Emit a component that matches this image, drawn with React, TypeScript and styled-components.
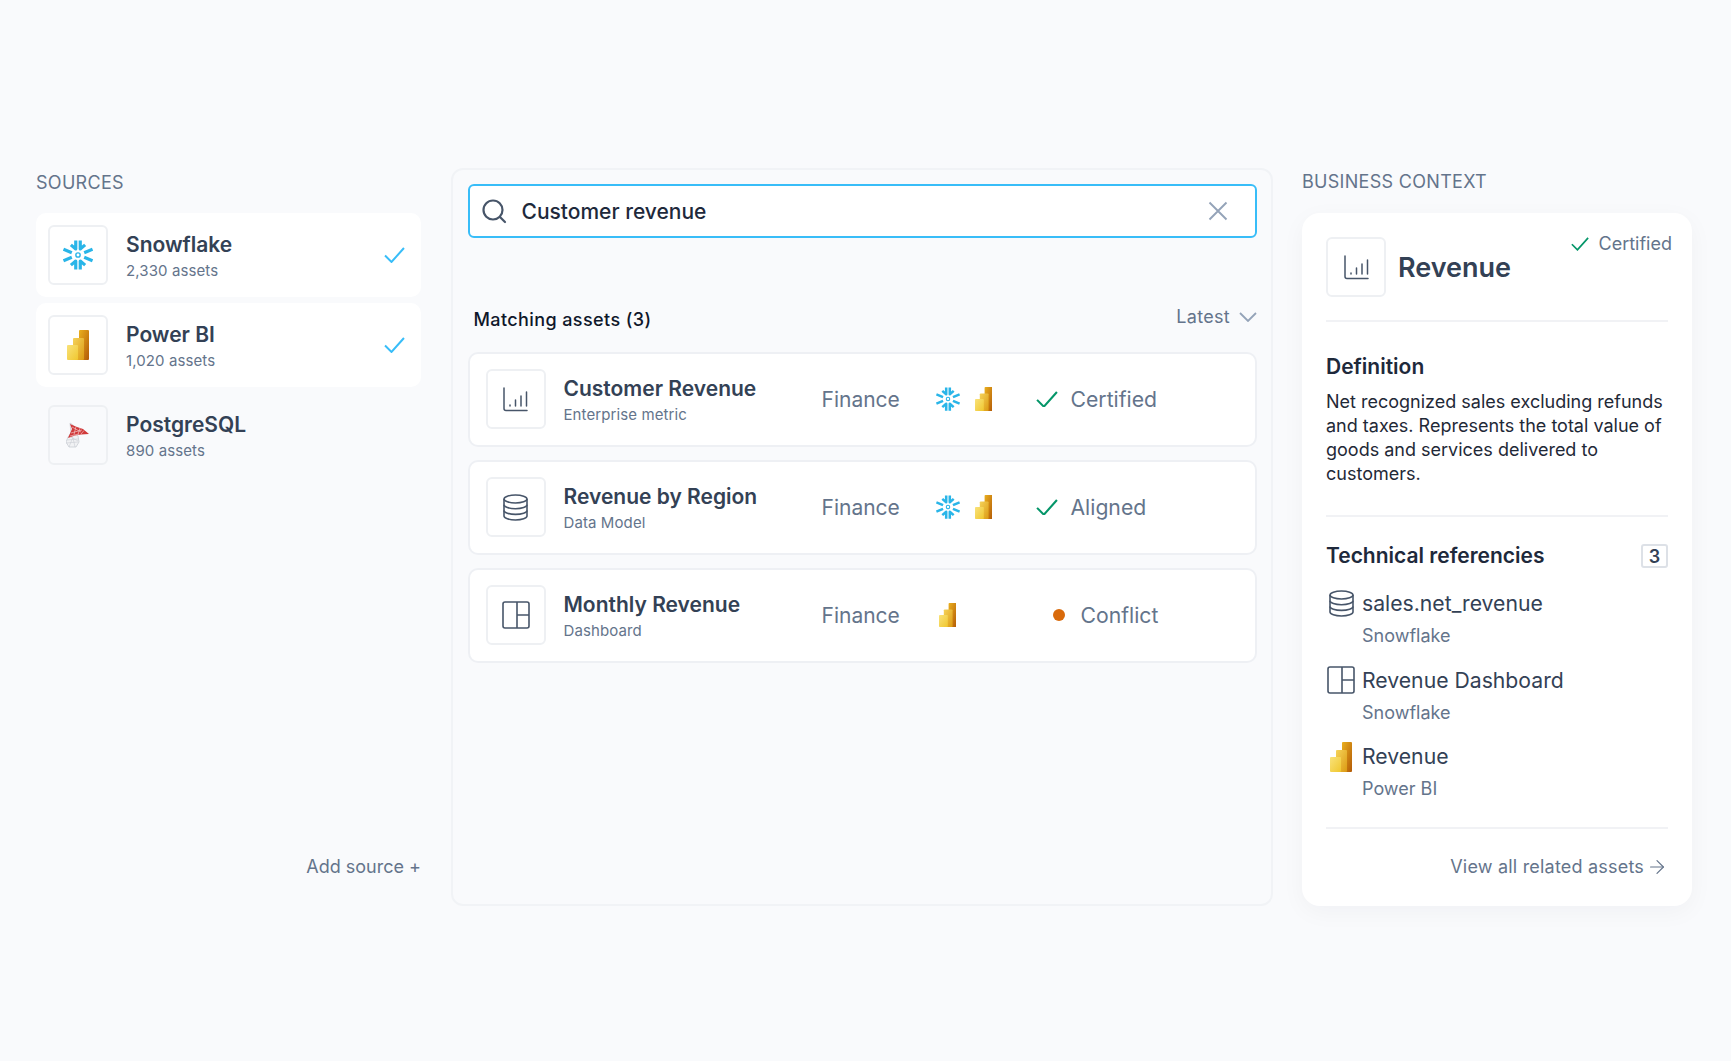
import React from "react";
import styled, { createGlobalStyle } from "styled-components";
import { ArrowRight } from "lucide-react";

const GlobalStyle = createGlobalStyle`
	html, body {
		margin: 0;
		padding: 0;
		background: #f9fafc;
		font-family: Inter, "Liberation Sans", sans-serif;
		-webkit-font-smoothing: antialiased;
	}
	* {
		box-sizing: border-box;
	}
`;

const Page = styled.div`
	width: 1731px;
	height: 1061px;
	padding: 168px 39px 0 36px;
	display: grid;
	grid-template-columns: 385px 822px 390px;
	column-gap: 29.5px;
	align-items: start;
`;

const Column = styled.section`
	height: 738px;
	display: flex;
	flex-direction: column;
`;

const SectionLabel = styled.h2<{ $nudge: number }>`
	margin: 0 0 20px;
	height: 25px;
	padding-top: ${(p) => p.$nudge}px;
	font-size: 18px;
	line-height: 25px;
	font-weight: 400;
	color: #64748b;
	letter-spacing: 0.3px;
`;

const SourceList = styled.div`
	display: flex;
	flex-direction: column;
	gap: 6px;
`;

const SourceCard = styled.div<{ $active?: boolean }>`
	height: 84px;
	padding: 12px 16px 12px 12px;
	display: flex;
	align-items: center;
	border-radius: 10px;
	background: ${(p) => (p.$active ? "#fff" : "transparent")};
`;

const IconBox = styled.div`
	width: 60px;
	height: 60px;
	flex: none;
	display: flex;
	align-items: center;
	justify-content: center;
	border: 2px solid #eef0f3;
	border-radius: 6px;
	color: #475569;
`;

const SourceText = styled.div`
	margin-left: 18px;
	padding-top: 2px;
	flex: 1;
`;

const SourceName = styled.div`
	font-size: 21px;
	line-height: 28px;
	font-weight: 600;
	color: #334155;
`;

const SourceCount = styled.div`
	margin-top: 2.5px;
	font-size: 15px;
	line-height: 20px;
	letter-spacing: 0.1px;
	color: #64748b;
`;

const AddSource = styled.div`
	margin-top: auto;
	margin-bottom: 27px;
	text-align: right;
	font-size: 18px;
	line-height: 24px;
	color: #64748b;
`;

const MiddlePanel = styled.section`
	height: 738px;
	padding: 14px 13.5px 0 15px;
	border: 2px solid #f1f3f6;
	border-radius: 12px;
`;

const SearchBar = styled.div`
	height: 54px;
	padding: 0 27px 0 11px;
	display: flex;
	align-items: center;
	background: #fff;
	border: 2px solid #38bdf8;
	border-radius: 6px;
	color: #475569;
`;

const SearchIcon = () => (
	<svg width="26" height="26" viewBox="0 0 26 26" fill="none" stroke="currentColor" strokeWidth="2.2" strokeLinecap="round">
		<circle cx="12" cy="12" r="9.5" />
		<path d="M19 19l5 5" />
	</svg>
);

const SearchText = styled.div`
	margin-left: 15px;
	flex: 1;
	font-size: 21px;
	font-weight: 500;
	color: #1e293b;
`;

const ListHead = styled.div`
	margin-top: 63px;
	padding: 0 0 0 6px;
	height: 34px;
	display: flex;
	align-items: center;
	justify-content: space-between;
`;

const ListTitle = styled.div`
	font-size: 18px;
	font-weight: 500;
	color: #0f172a;
	letter-spacing: 0.4px;
	padding-top: 2px;
`;

const SortBy = styled.div`
	display: flex;
	align-items: center;
	gap: 9px;
	font-size: 18px;
	color: #64748b;
	letter-spacing: 0.3px;
	margin-top: -3px;
`;

const AssetList = styled.div`
	margin-top: 16.5px;
	display: flex;
	flex-direction: column;
	gap: 13px;
`;

const AssetRow = styled.div`
	height: 95px;
	padding: 0 16px;
	display: flex;
	align-items: center;
	background: #fff;
	border: 2px solid #eef0f4;
	border-radius: 10px;
`;

const AssetInfo = styled.div`
	margin-left: 18px;
	padding-top: 2px;
	width: 258px;
`;

const AssetName = styled.div`
	font-size: 21px;
	line-height: 28px;
	font-weight: 600;
	color: #334155;
`;

const AssetType = styled.div`
	margin-top: 2.5px;
	font-size: 15px;
	line-height: 20px;
	letter-spacing: 0.1px;
	color: #64748b;
`;

const Domain = styled.div`
	width: 114px;
	font-size: 21px;
	color: #64748b;
`;

const Logos = styled.div`
	width: 100px;
	display: flex;
	align-items: center;
	gap: 12px;
`;

const LogoSlot = styled.div`
	width: 24px;
	display: flex;
	justify-content: center;
`;

const Status = styled.div<{ $conflict?: boolean }>`
	display: flex;
	align-items: center;
	gap: ${(p) => (p.$conflict ? "16px" : "13px")};
	margin-left: ${(p) => (p.$conflict ? "17px" : "0")};
	font-size: 21.2px;
	color: #64748b;
`;

const Dot = styled.span`
	width: 12px;
	height: 12px;
	border-radius: 50%;
	background: #d96a0b;
`;

const ContextCard = styled.div`
	position: relative;
	height: 693px;
	padding: 24px 24px 0;
	background: #fff;
	border-radius: 18px;
	box-shadow: 0 6px 24px rgba(15, 23, 42, 0.04);
`;

const CertifiedTag = styled.div`
	position: absolute;
	top: 19px;
	right: 20px;
	display: flex;
	align-items: center;
	gap: 10px;
	font-size: 18px;
	line-height: 24px;
	color: #64748b;
`;

const ContextHead = styled.div`
	display: flex;
	align-items: center;
	gap: 12px;
	padding-bottom: 23px;
	border-bottom: 2px solid #f1f2f5;
`;

const ContextTitle = styled.h1`
	margin: 0;
	font-size: 27px;
	font-weight: 600;
	color: #334155;
`;

const SubTitle = styled.h3`
	margin: 0;
	font-size: 21px;
	line-height: 28px;
	font-weight: 600;
	color: #1e293b;
`;

const DefinitionBlock = styled.div`
	padding: 31px 0 29px;
	border-bottom: 2px solid #f1f2f5;
`;

const DefinitionText = styled.p`
	margin: 9px 0 0;
	font-size: 18px;
	line-height: 24px;
	color: #1f2937;
`;

const RefsHead = styled.div`
	margin-top: 25px;
	display: flex;
	align-items: center;
	justify-content: space-between;
`;

const CountBadge = styled.span`
	width: 27px;
	height: 24px;
	display: flex;
	align-items: center;
	justify-content: center;
	border: 2px solid #dde1e7;
	border-radius: 3px;
	font-size: 18px;
	font-weight: 600;
	color: #334155;
`;

const RefList = styled.div`
	margin-top: 17px;
	padding-bottom: 10px;
	border-bottom: 2px solid #f1f2f5;
`;

const RefItem = styled.div`
	height: 76.5px;
	display: grid;
	grid-template-columns: 30px 1fr;
	column-gap: 6px;
	grid-template-rows: 33px 31px;
	color: #475569;
`;

const RefIcon = styled.div`
	display: flex;
	align-items: center;
	justify-content: center;
`;

const RefName = styled.div`
	font-size: 21.2px;
	line-height: 33px;
	color: #334155;
`;

const RefSource = styled.div`
	grid-column: 2;
	font-size: 18px;
	line-height: 31px;
	color: #64748b;
`;

const ViewAll = styled.div`
	margin-top: 26px;
	padding-right: 4px;
	display: flex;
	align-items: center;
	justify-content: flex-end;
	gap: 2px;
	font-size: 18px;
	line-height: 24px;
	letter-spacing: 0.2px;
	color: #64748b;
`;

const ArrowWrap = styled.span`
	display: flex;
	margin: -4px -4px -4px 0;
`;

const Tick = ({ color, w }: { color: string; w: number }) => (
	<svg width={w} height={w * 0.76} viewBox="0 0 21 16" fill="none">
		<path d="M1 8.5l6.5 6.5L20 1" stroke={color} strokeWidth="2" />
	</svg>
);

const ClearIcon = () => (
	<svg width="20" height="20" viewBox="0 0 20 20" fill="none" stroke="#94a3b8" strokeWidth="1.9">
		<path d="M1.5 1.5l17 17M18.5 1.5l-17 17" />
	</svg>
);

const ChevronIcon = () => (
	<svg width="18" height="10" viewBox="0 0 18 10" fill="none" stroke="#94a3b8" strokeWidth="1.8">
		<path d="M1 1l8 8 8-8" />
	</svg>
);

const DatabaseIcon = () => (
	<svg width="25" height="27" viewBox="0 0 25 27" fill="none" stroke="currentColor" strokeWidth="1.6">
		<ellipse cx="12.5" cy="5" rx="11.5" ry="4" />
		<path d="M1 5v17c0 2.2 5.1 4 11.5 4S24 24.2 24 22V5" />
		<path d="M1 10.7c0 2.2 5.1 4 11.5 4S24 12.9 24 10.7" />
		<path d="M1 16.4c0 2.2 5.1 4 11.5 4S24 18.6 24 16.4" />
	</svg>
);

const SnowflakeLogo = ({ size = 30 }: { size?: number }) => (
	<svg width={size} height={size} viewBox="-16 -16 32 32" fill="none">
		{[
			[1, 1],
			[-1, 1],
			[1, -1],
			[-1, -1],
		].map(([sx, sy]) => (
			<g key={`${sx}${sy}`} transform={`scale(${sx} ${sy})`} stroke="#29b5e8" strokeWidth="3.4">
				<path d="M-2.4 -15.5V-6.4L-7.6 -10.8" strokeLinejoin="round" />
				<path d="M-15.5 -6.2L-6.6 -2.4" />
			</g>
		))}
		<circle r="2.3" stroke="#29b5e8" strokeWidth="1.5" />
	</svg>
);

const PowerBiLogo = ({ height = 30 }: { height?: number }) => (
	<svg width={(height * 22) / 30} height={height} viewBox="0 0 22 30">
		<defs>
			<linearGradient id="pbiDark" x1="0" y1="0" x2="1" y2="1">
				<stop offset="0" stopColor="#eab01f" />
				<stop offset="1" stopColor="#b35a06" />
			</linearGradient>
			<linearGradient id="pbiMid" x1="0" y1="0" x2="1" y2="1">
				<stop offset="0" stopColor="#f5d35a" />
				<stop offset="1" stopColor="#dc9a12" />
			</linearGradient>
			<linearGradient id="pbiLight" x1="0" y1="0" x2="1" y2="1">
				<stop offset="0" stopColor="#f9e27a" />
				<stop offset="1" stopColor="#f0c72f" />
			</linearGradient>
		</defs>
		<rect x="12" y="0" width="10" height="30" rx="1" fill="url(#pbiDark)" />
		<rect x="6" y="8" width="11" height="22" rx="1" fill="url(#pbiMid)" />
		<rect x="0" y="15" width="11" height="15" rx="1" fill="url(#pbiLight)" />
	</svg>
);

const SqlLogo = () => (
	<svg width="24" height="26" viewBox="0 0 24 26" fill="none">
		<path d="M4 1l3 2 2 6 3 5 1 6-3 5H3l-3-5 2-5 3-4z" fill="#f1f2f4" stroke="#c9cdd3" strokeWidth="0.8" />
		<path d="M1 18l11-1M0 21l12-1M3 14l9 5M3 25l4-10M9 25l-2-9" stroke="#c9cdd3" strokeWidth="0.6" />
		<path d="M2 16l4-9-2-5 7 3 6 2 6 5-8 .5-6 1z" fill="#d0393a" />
		<path d="M6 5l9 5M10 4.5l-2 8M14 6l-2 6.5M18 8.5l-3 3.5M5 11l11-3M4 14l9-2" stroke="#f6d5d5" strokeWidth="0.6" />
	</svg>
);

const ChartIcon = () => (
	<svg width="25" height="25" viewBox="0 0 25 25" fill="none" stroke="currentColor" strokeWidth="1.5" strokeLinecap="round">
		<path d="M1 1v20.5a2 2 0 0 0 2 2h21" />
		<path d="M7 18v1M12.5 13v6M18 9v10M23.5 5v14" />
	</svg>
);

const LayoutIcon = () => (
	<svg width="28" height="28" viewBox="0 0 28 28" fill="none" stroke="currentColor" strokeWidth="1.6">
		<rect x="1" y="1" width="26" height="26" rx="2" />
		<path d="M15 1v26M15 14h12" />
	</svg>
);

const assets = [
	{ name: "Customer Revenue", type: "Enterprise metric", icon: <ChartIcon />, snow: true, status: "Certified" },
	{ name: "Revenue by Region", type: "Data Model", icon: <DatabaseIcon />, snow: true, status: "Aligned" },
	{ name: "Monthly Revenue", type: "Dashboard", icon: <LayoutIcon />, snow: false, status: "Conflict" },
];

const App = () => {
	return (
		<>
			<GlobalStyle />
			<Page>
				<Column>
					<SectionLabel $nudge={2}>SOURCES</SectionLabel>
					<SourceList>
						<SourceCard $active>
							<IconBox>
								<SnowflakeLogo />
							</IconBox>
							<SourceText>
								<SourceName>Snowflake</SourceName>
								<SourceCount>2,330 assets</SourceCount>
							</SourceText>
							<Tick color="#38bdf8" w={21} />
						</SourceCard>
						<SourceCard $active>
							<IconBox>
								<PowerBiLogo />
							</IconBox>
							<SourceText>
								<SourceName>Power BI</SourceName>
								<SourceCount>1,020 assets</SourceCount>
							</SourceText>
							<Tick color="#38bdf8" w={21} />
						</SourceCard>
						<SourceCard>
							<IconBox>
								<SqlLogo />
							</IconBox>
							<SourceText>
								<SourceName>PostgreSQL</SourceName>
								<SourceCount>890 assets</SourceCount>
							</SourceText>
						</SourceCard>
					</SourceList>
					<AddSource>Add source +</AddSource>
				</Column>

				<MiddlePanel>
					<SearchBar>
						<SearchIcon />
						<SearchText>Customer revenue</SearchText>
						<ClearIcon />
					</SearchBar>
					<ListHead>
						<ListTitle>Matching assets (3)</ListTitle>
						<SortBy>
							Latest <ChevronIcon />
						</SortBy>
					</ListHead>
					<AssetList>
						{assets.map((a) => (
							<AssetRow key={a.name}>
								<IconBox>{a.icon}</IconBox>
								<AssetInfo>
									<AssetName>{a.name}</AssetName>
									<AssetType>{a.type}</AssetType>
								</AssetInfo>
								<Domain>Finance</Domain>
								<Logos>
									{a.snow && (
										<LogoSlot>
											<SnowflakeLogo size={24} />
										</LogoSlot>
									)}
									<LogoSlot>
										<PowerBiLogo height={24} />
									</LogoSlot>
								</Logos>
								<Status $conflict={a.status === "Conflict"}>
									{a.status === "Conflict" ? <Dot /> : <Tick color="#059669" w={22} />}
									{a.status}
								</Status>
							</AssetRow>
						))}
					</AssetList>
				</MiddlePanel>

				<Column>
					<SectionLabel $nudge={1}>BUSINESS CONTEXT</SectionLabel>
					<ContextCard>
						<CertifiedTag>
							<Tick color="#059669" w={18} />
							Certified
						</CertifiedTag>
						<ContextHead>
							<IconBox>
								<ChartIcon />
							</IconBox>
							<ContextTitle>Revenue</ContextTitle>
						</ContextHead>
						<DefinitionBlock>
							<SubTitle>Definition</SubTitle>
							<DefinitionText>
								Net recognized sales excluding refunds and taxes. Represents the total value of goods and services delivered to customers.
							</DefinitionText>
						</DefinitionBlock>
						<RefsHead>
							<SubTitle>Technical referencies</SubTitle>
							<CountBadge>3</CountBadge>
						</RefsHead>
						<RefList>
							<RefItem>
								<RefIcon>
									<DatabaseIcon />
								</RefIcon>
								<RefName>sales.net_revenue</RefName>
								<RefSource>Snowflake</RefSource>
							</RefItem>
							<RefItem>
								<RefIcon>
									<LayoutIcon />
								</RefIcon>
								<RefName>Revenue Dashboard</RefName>
								<RefSource>Snowflake</RefSource>
							</RefItem>
							<RefItem>
								<RefIcon>
									<PowerBiLogo />
								</RefIcon>
								<RefName>Revenue</RefName>
								<RefSource>Power BI</RefSource>
							</RefItem>
						</RefList>
						<ViewAll>
							View all related assets
							<ArrowWrap>
								<ArrowRight size={22} strokeWidth={1.3} />
							</ArrowWrap>
						</ViewAll>
					</ContextCard>
				</Column>
			</Page>
		</>
	);
};

export default App;
